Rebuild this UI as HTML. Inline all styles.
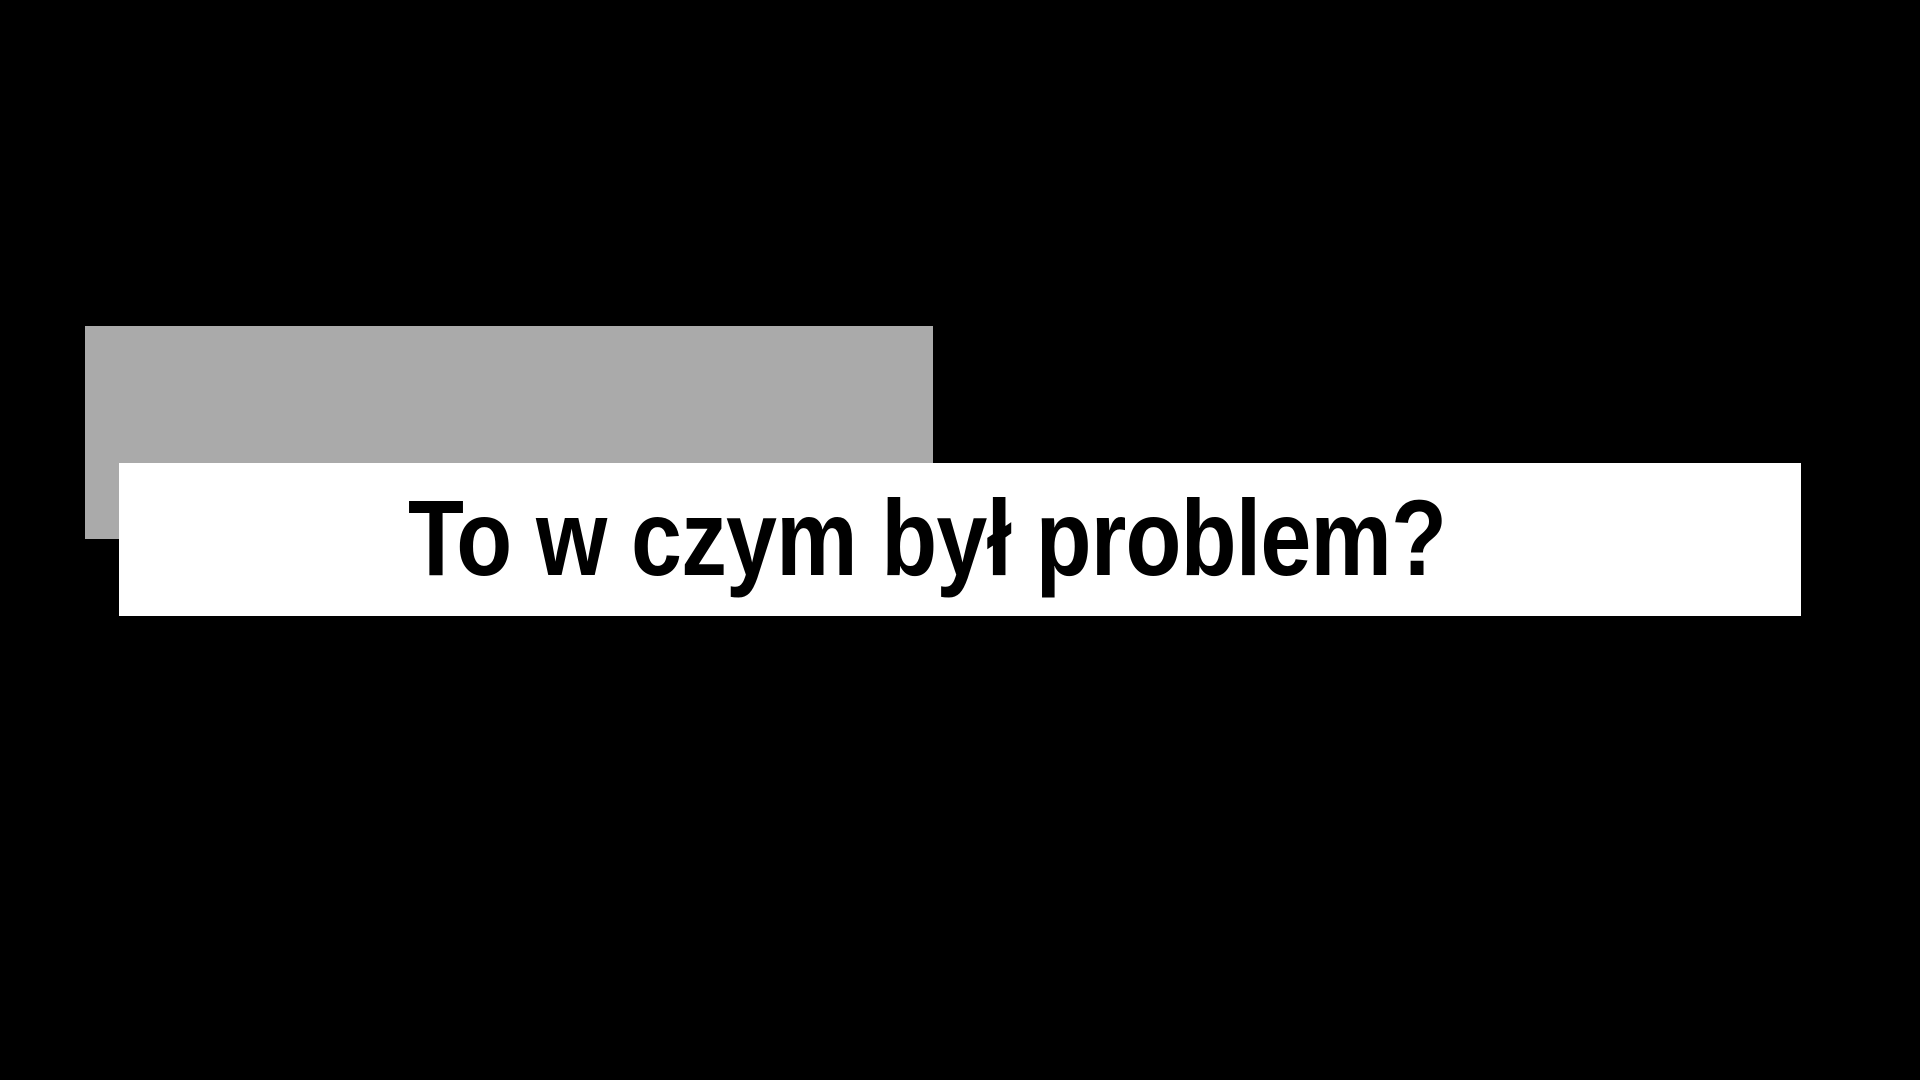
<!DOCTYPE html>
<html><head><meta charset="utf-8"><style>
html,body{margin:0;padding:0;background:#000;width:1920px;height:1080px;overflow:hidden;position:relative}
.g{position:absolute;left:85px;top:326px;width:848px;height:213px;background:#aaaaaa}
.w{position:absolute;left:119px;top:463px;width:1682px;height:153px;background:#fff}
.t{position:absolute;left:408px;top:478px;font-family:"Liberation Sans",sans-serif;font-weight:bold;font-size:108px;line-height:120px;color:#000;white-space:nowrap;letter-spacing:-1px;transform:scaleX(0.848);transform-origin:0 0}
</style></head><body>
<div class="g"></div>
<div class="w"></div>
<div class="t">To w czym był problem?</div>
</body></html>
